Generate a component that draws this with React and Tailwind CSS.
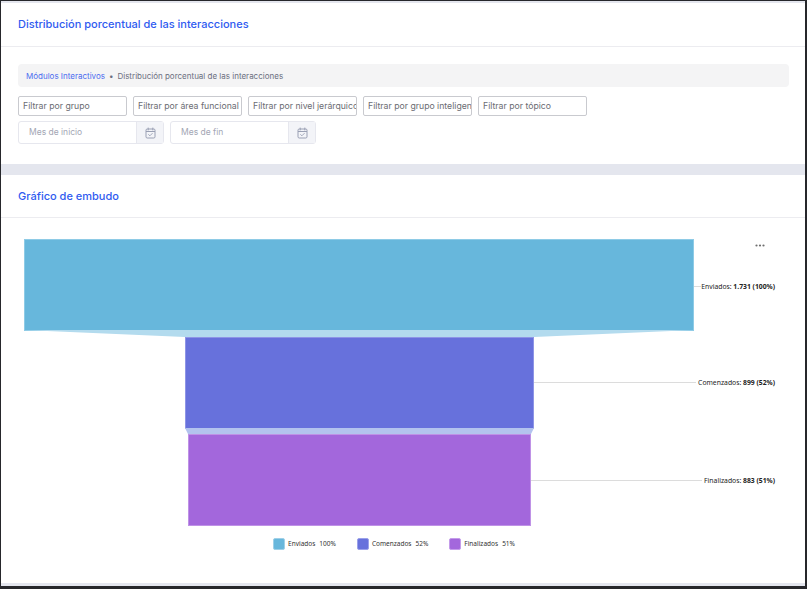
import React from 'react';

const filters = [
  'Filtrar por grupo',
  'Filtrar por área funcional',
  'Filtrar por nivel jerárquico',
  'Filtrar por grupo inteligente',
  'Filtrar por tópico',
];

const legend = [
  { name: 'Enviados', pct: '100%', color: 'bg-[#67b7dc]', border: 'border-[#9fd0e8]' },
  { name: 'Comenzados', pct: '52%', color: 'bg-[#6771dc]', border: 'border-[#9ba1ea]' },
  { name: 'Finalizados', pct: '51%', color: 'bg-[#a367dc]', border: 'border-[#c49cea]' },
];

function CalendarIcon() {
  return (
    <svg width="11" height="12" viewBox="0 0 11 12" fill="none">
      <rect x="1" y="2" width="9" height="9" rx="1.2" stroke="#9aa0b4" strokeWidth="1" />
      <path d="M1 4.5h9" stroke="#9aa0b4" strokeWidth="1" />
      <path d="M3.2 1v2M7.8 1v2" stroke="#9aa0b4" strokeWidth="1" strokeLinecap="round" />
      <path d="M3.6 7.6l1.3 1.2 2.4-2.4" stroke="#9aa0b4" strokeWidth="0.9" strokeLinecap="round" strokeLinejoin="round" />
    </svg>
  );
}

function DateInput({ placeholder }) {
  return (
    <div className="flex h-[23px] w-[146px] rounded-[3px] border border-[#e6e7ee] bg-white">
      <input
        placeholder={placeholder}
        className="min-w-0 flex-1 bg-transparent pl-[10px] text-[8.5px] outline-none placeholder:text-[#a3a6b4]"
      />
      <div className="flex w-[27px] items-center justify-center border-l border-[#e6e7ee] bg-[#f3f4f8]">
        <CalendarIcon />
      </div>
    </div>
  );
}

function Funnel() {
  const label = 'font-["Noto_Sans",sans-serif]';
  return (
    <svg width="804" height="319" viewBox="0 0 804 319" className="block">
      {/* bars */}
      <rect x="23.5" y="21.5" width="669" height="91" fill="#67b7dc" stroke="#8ecbe6" />
      <polygon points="23,112 693,112 533,119 184,119" fill="#b3dbee" />
      <rect x="184.5" y="119.5" width="348" height="91" fill="#6771dc" stroke="#8e95e6" />
      <polygon points="184,210 533,210 530,216 187,216" fill="#b3c3ee" />
      <rect x="187.5" y="216.5" width="342" height="91" fill="#a367dc" stroke="#bf92e6" />

      {/* ticks */}
      <line x1="693" y1="68.5" x2="700" y2="68.5" stroke="#dcdcdc" />
      <line x1="533" y1="164.5" x2="695" y2="164.5" stroke="#dcdcdc" />
      <line x1="530" y1="262.5" x2="701" y2="262.5" stroke="#dcdcdc" />

      <g className={label} fontSize="6.8" fill="#222">
        <text x="774" y="70.5" textAnchor="end">
          Enviados: <tspan fontWeight="700">1.731 (100%)</tspan>
        </text>
        <text x="774" y="166.5" textAnchor="end">
          Comenzados: <tspan fontWeight="700">899 (52%)</tspan>
        </text>
        <text x="774" y="264.5" textAnchor="end">
          Finalizados: <tspan fontWeight="700">883 (51%)</tspan>
        </text>
      </g>

      {/* menu dots */}
      <g fill="#6f6f6f">
        <circle cx="755.5" cy="27.5" r="1.1" />
        <circle cx="759" cy="27.5" r="1.1" />
        <circle cx="762.5" cy="27.5" r="1.1" />
      </g>
    </svg>
  );
}

export default function App() {
  return (
    <div className="h-[589px] w-[807px] overflow-hidden bg-[#26272b] pb-[3px] pl-px pr-[2px] pt-px font-['Inter',sans-serif]">
      <div className="flex h-full flex-col bg-[#e4e6ee] pt-[2px]">
        {/* Distribución card */}
        <div className="h-[161px] bg-white">
          <div className="flex h-[44px] items-center border-b border-[#ececf0] px-[17px]">
            <h1 className="text-[11px] font-medium text-[#2f5bf0]">
              Distribución porcentual de las interacciones
            </h1>
          </div>
          <div className="px-[17px] pr-[16px] pt-[17px]">
            <div className="flex h-[23px] items-center rounded-[4px] bg-[#f4f4f5] px-[8px] text-[8px]">
              <span className="text-[#4b6cf0]">Módulos Interactivos</span>
              <span className="mx-[4px] text-[#6b6f80]">•</span>
              <span className="text-[#6b6f80]">Distribución porcentual de las interacciones</span>
            </div>
            <div className="mt-[9px] flex gap-[6px]">
              {filters.map((f) => (
                <input
                  key={f}
                  placeholder={f}
                  className="h-[20px] w-[109px] rounded-[2px] border border-[#c9cacf] bg-white pl-[4px] text-[8.7px] outline-none placeholder:text-[#6b6c72]"
                />
              ))}
            </div>
            <div className="mt-[5px] flex gap-[6px]">
              <DateInput placeholder="Mes de inicio" />
              <DateInput placeholder="Mes de fin" />
            </div>
          </div>
        </div>

        {/* Embudo card */}
        <div className="mt-[11px] h-[408px] bg-white">
          <div className="flex h-[43px] items-center border-b border-[#ececf0] px-[17px]">
            <h2 className="text-[11px] font-medium text-[#2f5bf0]">Gráfico de embudo</h2>
          </div>
          <Funnel />
          <div className="flex h-[14px] items-center justify-center gap-[21px] pr-[18px] font-['Noto_Sans',sans-serif] text-[6.5px] text-[#333]">
            {legend.map((l) => (
              <div key={l.name} className="flex items-center gap-[3px]">
                <span className={`h-[12px] w-[12px] rounded-[2px] border ${l.color} ${l.border}`} />
                <span>{l.name}</span>
                <span className="ml-[1px]">{l.pct}</span>
              </div>
            ))}
          </div>
        </div>
      </div>
    </div>
  );
}
